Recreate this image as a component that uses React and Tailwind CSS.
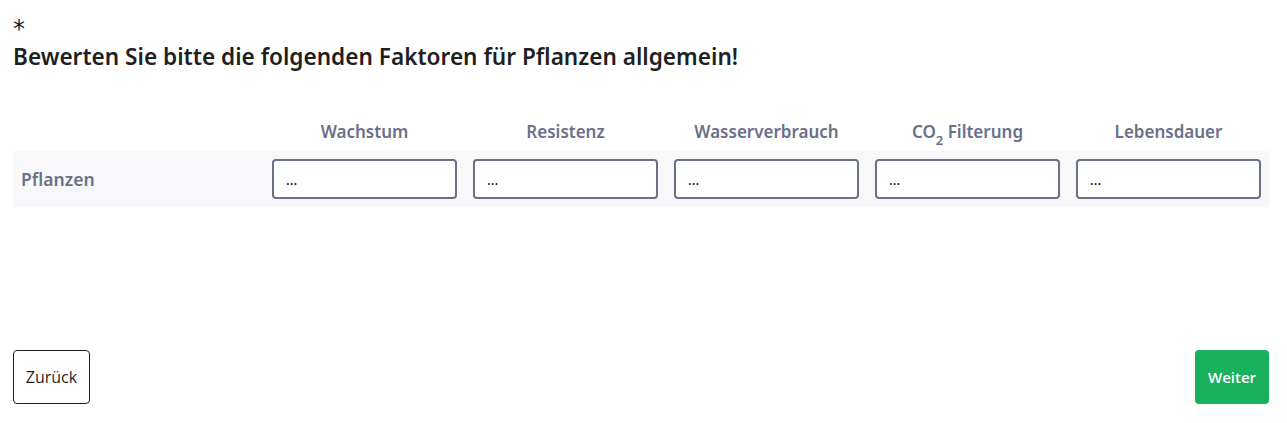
import React from "react";

const cols = ["Wachstum", "Resistenz", "Wasserverbrauch", null, "Lebensdauer"];

export default function App() {
  return (
    <div className="w-[1287px] h-[423px] bg-white px-[13px] pt-[16px] text-[#1f1f1f]" style={{ fontFamily: '"Noto Sans", "Open Sans", sans-serif' }}>
      <div className="text-[24px] leading-[26px] h-[26px]" style={{ fontFamily: '"DejaVu Sans", sans-serif' }}>*</div>
      <h1 className="text-[22.6px] leading-[30px] font-semibold">Bewerten Sie bitte die folgenden Faktoren für Pflanzen allgemein!</h1>
      <div className="mt-[40px] w-[1256px]">
        <div className="grid grid-cols-[251px_repeat(5,201px)] h-[39px] items-center text-[17px] font-semibold text-[#6b7089]">
          <div></div>
          {cols.map((c, i) => (
            <div key={i} className="text-center">
              {c === null ? (
                <span>CO<sub className="text-[13px] align-[-4px]">2</sub> Filterung</span>
              ) : c}
            </div>
          ))}
        </div>
        <div className="grid grid-cols-[251px_repeat(5,201px)] h-[56px] items-center bg-[#f8f8fa]">
          <div className="pl-[8px] text-[17.5px] font-semibold text-[#6b7089]">Pflanzen</div>
          {cols.map((c, i) => (
            <div key={i} className="px-[8px]">
              <div className="h-[40px] w-[185px] border-2 border-[#6b7089] rounded-[4px] bg-white flex items-center pl-[12px] text-[14px] text-black">...</div>
            </div>
          ))}
        </div>
      </div>
      <div className="mt-[143px] flex justify-between w-[1256px]">
        <button className="w-[77px] h-[54px] border border-[#1f1f1f] rounded-[4px] bg-white text-[16px] text-[#1f1f1f] font-normal" style={{ fontFamily: '"Open Sans", sans-serif' }}>Zurück</button>
        <button className="w-[74px] h-[54px] rounded-[4px] bg-[#19b15e] text-[15px] text-white font-semibold" style={{ fontFamily: '"Open Sans", sans-serif' }}>Weiter</button>
      </div>
    </div>
  );
}
